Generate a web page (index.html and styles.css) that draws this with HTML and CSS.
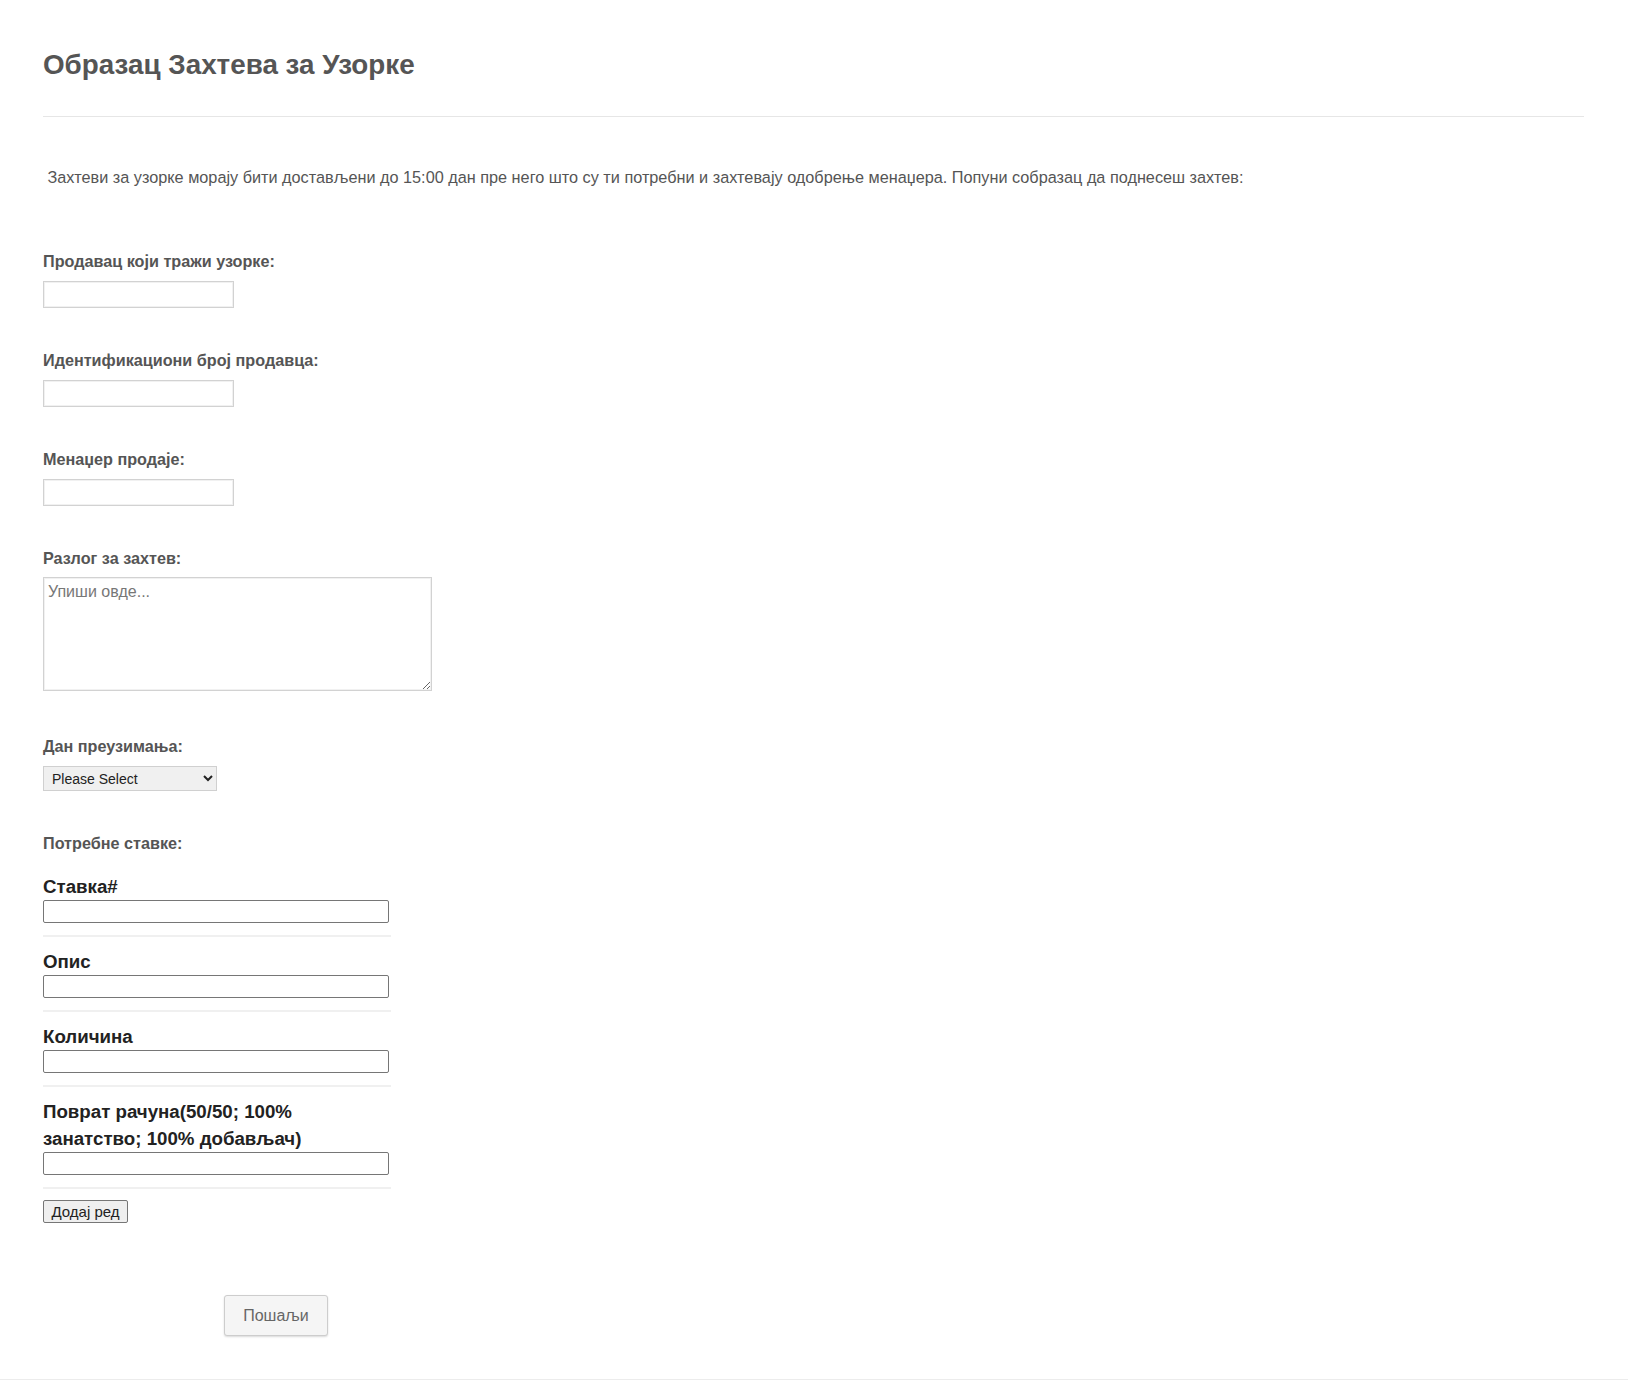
FILE: index.html
```html
<!DOCTYPE html>
<html lang="sr">

<head>
    <meta charset="UTF-8">
    <meta name="viewport" content="width=device-width, initial-scale=1.0">
    <title>Образац Захтева за Узорке</title>
    <link rel="stylesheet" href="styles.css">
</head>

<body>
    <form class="form" id="form">
        <h1 class="form-title">Образац Захтева за Узорке</h1>
        <hr class="form-line">

        <p class="form-text">&nbsp;Захтеви за узорке морају бити достављени до 15:00 дан пре него што су ти потребни и захтевају одобрење менаџера. Попуни собразац да поднесеш захтев:</p>

        <div class="field">
            <label class="field-label" for="seller">Продавац који тражи узорке:</label>
            <input class="field-input" type="text" id="seller" name="seller">
        </div>

        <div class="field">
            <label class="field-label" for="sellerId">Идентификациони број продавца:</label>
            <input class="field-input" type="text" id="sellerId" name="sellerId">
        </div>

        <div class="field">
            <label class="field-label" for="manager">Менаџер продаје:</label>
            <input class="field-input" type="text" id="manager" name="manager">
        </div>

        <div class="field field-reason">
            <label class="field-label" for="reason">Разлог за захтев:</label>
            <textarea class="field-area" id="reason" name="reason" placeholder="Упиши овде..."></textarea>
        </div>

        <div class="field field-day">
            <label class="field-label" for="day">Дан преузимања:</label>
            <select class="field-select" id="day" name="day">
                <option value="">Please Select</option>
                <option value="mon">Понедељак</option>
                <option value="tue">Уторак</option>
                <option value="wed">Среда</option>
                <option value="thu">Четвртак</option>
                <option value="fri">Петак</option>
            </select>
        </div>

        <div class="items">
            <div class="field-label">Потребне ставке:</div>

            <div class="item-list">
                <div class="item-row">
                    <label class="item-label" for="itemNo">Ставка#</label>
                    <input class="item-input" type="text" id="itemNo" name="itemNo">
                </div>
                <div class="item-row">
                    <label class="item-label" for="itemDesc">Опис</label>
                    <input class="item-input" type="text" id="itemDesc" name="itemDesc">
                </div>
                <div class="item-row">
                    <label class="item-label" for="itemQty">Количина</label>
                    <input class="item-input" type="text" id="itemQty" name="itemQty">
                </div>
                <div class="item-row">
                    <label class="item-label" for="itemBill">Поврат рачуна(50/50; 100% занатство; 100% добављач)</label>
                    <input class="item-input" type="text" id="itemBill" name="itemBill">
                </div>
            </div>

            <button class="add-row" type="button">Додај ред</button>
        </div>

        <div class="submit-row">
            <button class="submit" type="submit">Пошаљи</button>
        </div>
    </form>
</body>

</html>
```

FILE: styles.css
```css
body {
    margin: 0;
    background: #fff;
    font-family: 'Liberation Sans', Arial, sans-serif;
    color: #555;
}

.form {
    padding: 0 44px 0 43px;
    border-bottom: 1px solid #ececec;
    height: 1379px;
}

.form-title {
    margin: 0;
    padding-top: 50px;
    font-size: 27.8px;
    line-height: 30px;
    font-weight: bold;
    color: #555;
}

.form-line {
    margin: 36px 0 0;
    border: 0;
    border-top: 1px solid #e6e6e6;
}

.form-text {
    margin: 50px 0 0;
    font-size: 16.25px;
    line-height: 20px;
    color: #555;
}

.field {
    margin-top: 64px;
}

.field + .field {
    margin-top: 42px;
}

.field + .field-day {
    margin-top: 45px;
}

.field-label {
    display: block;
    margin-bottom: 10px;
    font-size: 16.2px;
    line-height: 20px;
    font-weight: bold;
    color: #555;
}

.field-reason .field-label {
    margin-bottom: 9px;
}

.field-input {
    display: block;
    box-sizing: border-box;
    width: 191px;
    height: 27px;
    margin: 0;
    border: 1px solid #d2d2d2;
    box-shadow: inset 0 0 0 1px #f1f1f1;
    background: #fff;
    outline: 0;
}

.field-area {
    display: block;
    box-sizing: border-box;
    width: 389px;
    height: 114px;
    margin: 0;
    padding: 5px 4px;
    border: 1px solid #d2d2d2;
    box-shadow: inset 0 0 0 1px #f1f1f1;
    font-family: 'Liberation Sans', Arial, sans-serif;
    font-size: 16px;
    color: #333;
}

.field-area::placeholder {
    color: #777;
}

.field-select {
    display: block;
    box-sizing: border-box;
    width: 174px;
    height: 25px;
    margin: 0;
    padding: 0 4px;
    border: 1px solid #d0d0d0;
    background-color: #f0f0f0;
    font-family: 'Liberation Sans', Arial, sans-serif;
    font-size: 14px;
    color: #222;
}

.items {
    margin-top: 42px;
}

.items > .field-label {
    margin-bottom: 20px;
}

.item-list {
    width: 348px;
}

.item-row {
    padding-bottom: 12px;
    margin-bottom: 11px;
    border-bottom: 2px solid #f0f0f0;
}

.item-label {
    display: block;
    font-size: 18.7px;
    line-height: 27px;
    font-weight: bold;
    color: #222;
}

.item-input {
    display: block;
    box-sizing: border-box;
    width: 346px;
    height: 23px;
    margin: 0;
    border: 1px solid #767676;
    border-radius: 2px;
    background: #fff;
}

.add-row {
    display: block;
    height: 23px;
    width: 85px;
    margin-top: 2px;
    padding: 0;
    border: 1px solid #767676;
    border-radius: 2px;
    background: #efefef;
    font-family: 'Liberation Sans', Arial, sans-serif;
    font-size: 15px;
    color: #222;
}

.submit-row {
    margin-top: 72px;
    padding-left: 181px;
}

.submit {
    width: 104px;
    height: 41px;
    border: 1px solid #cdcdcd;
    border-radius: 3px;
    background: #f5f5f5;
    box-shadow: 0 1px 2px rgba(0, 0, 0, 0.15);
    font-family: 'Liberation Sans', Arial, sans-serif;
    font-size: 16px;
    color: #666;
}
```
